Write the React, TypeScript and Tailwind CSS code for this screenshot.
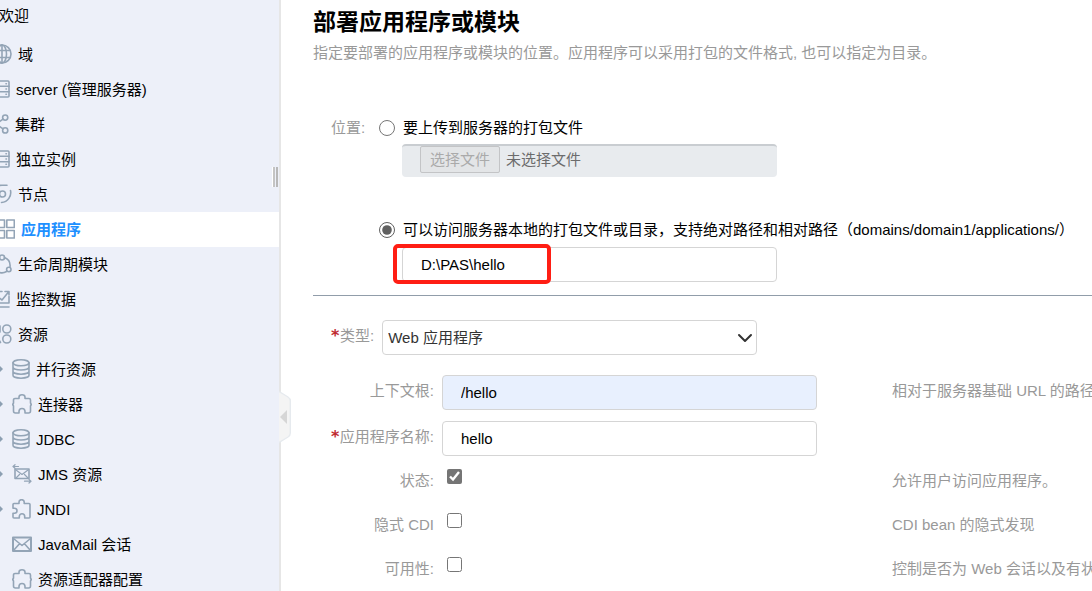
import { useState } from 'react';
import type { ReactNode } from 'react';
import clsx from 'clsx';
import { ChevronDown } from 'lucide-react';

interface IconProps {
    className: string;
    viewBox: string;
    children: ReactNode;
}

function Icon({ className, viewBox, children }: IconProps) {
    return (
        <svg className={clsx('mb-[2px] shrink-0 text-[#93a4b6]', className)} viewBox={viewBox} fill="none" stroke="currentColor" strokeWidth="1.6" strokeLinejoin="round" strokeLinecap="round" aria-hidden="true">
            {children}
        </svg>
    );
}

const GlobeIcon = () => (
    <Icon className="w-5 h-5" viewBox="0 0 20 20">
        <circle cx="10" cy="10" r="9" />
        <ellipse cx="10" cy="10" rx="4.5" ry="9" />
        <path d="M10 1v18M2 6.5h16M2 13.5h16" />
    </Icon>
);

const ServerIcon = () => (
    <Icon className="w-[18px] h-5" viewBox="0 0 18 20">
        <rect x="1" y="2" width="16" height="16" rx="1" />
        <path d="M1 7.3h16M1 12.7h16M14 4.7h.4M14 10h.4M14 15.3h.4" />
    </Icon>
);

const ClusterIcon = () => (
    <Icon className="w-[17px] h-5" viewBox="0 0 17 20">
        <circle cx="13.2" cy="3.6" r="2.6" />
        <circle cx="3.8" cy="10" r="2.6" />
        <circle cx="13.2" cy="16.4" r="2.6" />
        <path d="M11 5.2L6 8.6M6 11.4l5 3.4" />
    </Icon>
);

const NodeIcon = () => (
    <Icon className="w-5 h-5" viewBox="0 0 20 20">
        <circle cx="10.5" cy="10" r="3" />
        <path d="M15 1.2H10A8.800 8.800 0 0 0 2.500 14.500M18.500 6.500c1.200 5.500-2.500 11.500-9 12" />
    </Icon>
);

const AppsIcon = () => (
    <Icon className="w-[23px] h-5" viewBox="0 0 23 20">
        <rect x="5" y="1" width="7.5" height="7.5" />
        <rect x="14.8" y="1" width="7.5" height="7.5" />
        <rect x="5" y="11.5" width="7.5" height="7.5" />
        <rect x="14.8" y="11.5" width="7.5" height="7.5" />
    </Icon>
);

const LifecycleIcon = () => (
    <Icon className="w-5 h-5" viewBox="0 0 20 20">
        <circle cx="10" cy="3.5" r="2.5" />
        <circle cx="16.8" cy="15.5" r="2.2" />
        <circle cx="3.2" cy="15.5" r="2.2" />
        <path d="M12.500 3.500c4 1.500 6 5 5.500 9.500M7.500 3.500c-4 1.500-6 5-5.500 9.500M5.500 17.500c3 1.800 6 1.800 9 0" />
    </Icon>
);

const MonitorIcon = () => (
    <Icon className="w-[18px] h-5" viewBox="0 0 18 20">
        <path d="M10 2.500H1V14h16V7.500M4 6.500l6 4.500L16.500 3M13 2.500h4v3.500M1 18h16" />
    </Icon>
);

const ResourceIcon = () => (
    <Icon className="w-5 h-5" viewBox="0 0 20 20">
        <rect x="1" y="1.5" width="7" height="7" rx="1" />
        <circle cx="14.8" cy="5" r="4" />
        <path d="M4.5 11.5L8.5 18.5H1z" />
        <circle cx="14.8" cy="15" r="4" />
    </Icon>
);

const DatabaseIcon = () => (
    <Icon className="w-[18px] h-5" viewBox="0 0 18 20">
        <ellipse cx="9" cy="3.8" rx="8" ry="3" />
        <path d="M1 3.8v12.4c0 1.7 3.6 3 8 3s8-1.3 8-3V3.8M1 8c0 1.7 3.6 3 8 3s8-1.3 8-3M1 12.2c0 1.7 3.6 3 8 3s8-1.3 8-3" />
    </Icon>
);

const ConnectorIcon = () => (
    <Icon className="w-5 h-5" viewBox="0 0 20 20">
        <path d="M3 4.500h4V3.300a3 2.500 0 0 1 6 0v1.200h4a1.500 1.500 0 0 1 1.500 1.500v3l.8 1.500-.8 1.500v5a2 2 0 0 1-2 2H13v-1.500a3 3 0 0 0-6 0V19H3.500a2 2 0 0 1-2-2v-5L.7 10.500 1.500 9V6A1.500 1.500 0 0 1 3 4.500z" />
    </Icon>
);

const JmsIcon = () => (
    <Icon className="w-5 h-5" viewBox="0 0 20 20">
        <rect x="3" y="5" width="14" height="9.5" />
        <path d="M4 6l6 4.500L16 6M4 14l3.500-3.500M16 14l-3.500-3.500M6.500 2.500H1M3 .700L1 2.500l2 1.800M12.500 17.200H19M17 15.400l2 1.800-2 1.800" strokeWidth="1.2" />
    </Icon>
);

const PuzzleIcon = () => (
    <Icon className="w-[19px] h-5" viewBox="0 0 19 20">
        <path d="M2 4.500h5V3a2.600 2.300 0 0 1 5.200 0v1.500H17a1 1 0 0 1 1 1V18a1 1 0 0 1-1 1h-4.300v-1.500a2.700 2.700 0 0 0-5.400 0V19H2a1 1 0 0 1-1-1v-3.800h1.500a2.500 2.500 0 0 0 0-5H1V5.500a1 1 0 0 1 1-1z" />
    </Icon>
);

const MailIcon = () => (
    <Icon className="w-5 h-5" viewBox="0 0 20 20">
        <rect x="1" y="3.5" width="18" height="13.5" strokeWidth="2" />
        <path d="M1.500 4.500L10 11.500l8.500-7M1.500 16.500l6-6.800M18.500 16.500l-6-6.800" />
    </Icon>
);

const menu = [
    { label: '域', icon: <GlobeIcon /> },
    { label: 'server (管理服务器)', icon: <ServerIcon /> },
    { label: '集群', icon: <ClusterIcon /> },
    { label: '独立实例', icon: <ServerIcon /> },
    { label: '节点', icon: <NodeIcon /> },
    { label: '应用程序', icon: <AppsIcon /> },
    { label: '生命周期模块', icon: <LifecycleIcon /> },
    { label: '监控数据', icon: <MonitorIcon /> },
    { label: '资源', icon: <ResourceIcon /> },
];

const resources = [
    { label: '并行资源', icon: <DatabaseIcon />, expandable: true },
    { label: '连接器', icon: <ConnectorIcon />, expandable: true },
    { label: 'JDBC', icon: <DatabaseIcon />, expandable: true },
    { label: 'JMS 资源', icon: <JmsIcon />, expandable: true },
    { label: 'JNDI', icon: <PuzzleIcon />, expandable: true },
    { label: 'JavaMail 会话', icon: <MailIcon />, expandable: false },
    { label: '资源适配器配置', icon: <ConnectorIcon />, expandable: false },
];

function Sidebar() {
    const [active, setActive] = useState('应用程序');

    return (
        <aside className="relative w-[281px] shrink-0 border-r-2 border-[#e6e6e6] bg-[#edf0f9]">
            <nav className="h-full overflow-hidden">
                <a href="#welcome" className="-ml-px flex h-[37px] items-center pb-[5px]">欢迎</a>
                {menu.map((item) => (
                    <a
                        key={item.label}
                        href="#menu"
                        onClick={() => setActive(item.label)}
                        className={clsx('flex h-[35px] items-center', active === item.label && 'bg-white font-bold text-[#1e90ff]')}
                    >
                        <span className="-ml-2 flex items-center gap-[6px]">
                            {item.icon}
                            {item.label}
                        </span>
                    </a>
                ))}
                {resources.map((item) => (
                    <a key={item.label} href="#resource" className="flex h-[35px] items-center">
                        <span className="w-3">
                            {item.expandable && (
                                <svg className="mb-[2px] h-2 w-[3px]" viewBox="0 0 3 8" fill="#8c9fb2" aria-hidden="true">
                                    <path d="M0 1l3 3-3 3z" />
                                </svg>
                            )}
                        </span>
                        <span className="flex items-center gap-[6px]">
                            {item.icon}
                            {item.label}
                        </span>
                    </a>
                ))}
            </nav>

            {/* Resize grip */}
            <div className="absolute right-px top-[167px] flex h-5 gap-px border-l border-white">
                <span className="w-[2px] bg-[#c4c4c4]" />
                <span className="w-[2px] bg-[#b8b8b8]" />
            </div>

            {/* Collapse handle */}
            <button type="button" aria-label="collapse" className="absolute -right-3 top-[391px] z-10">
                <svg className="h-[52px] w-3" viewBox="0 0 12 52">
                    <path d="M0 .5L9 6q2.3 1.5 2.3 4v32q0 2.5-2.3 4L0 51.5z" fill="#f4f4f4" />
                    <path d="M0 .5L9 6q2.3 1.5 2.3 4v32q0 2.5-2.3 4L0 51.5" fill="none" stroke="#e6eaee" strokeWidth="1.4" />
                    <path d="M8 19v14L1 26z" fill="#d6d6d6" />
                </svg>
            </button>
        </aside>
    );
}

const fieldClass = 'h-[35px] w-[375px] shrink-0 rounded-[4px] border border-[#d5d5d5]';

function FieldLabel({ htmlFor, required, children }: { htmlFor: string; required?: boolean; children: ReactNode }) {
    return (
        <label htmlFor={htmlFor} className="flex justify-end pb-1 text-[#999]">
            {required && <span className="w-[9px] font-['DejaVu_Sans',sans-serif] text-base leading-5 font-bold text-[#c02a30]">*</span>}
            {children}
        </label>
    );
}

interface RowProps {
    id: string;
    label: string;
    required?: boolean;
    hint?: string;
    children: ReactNode;
}

function Row({ id, label, required, hint, children }: RowProps) {
    return (
        <div className="flex items-center">
            <div className="mr-2 w-[103px] shrink-0">
                <FieldLabel htmlFor={id} required={required}>{label}</FieldLabel>
            </div>
            {children}
            {hint && <p className="ml-[75px] pb-1 text-[#999]">{hint}</p>}
        </div>
    );
}

function CheckRow({ id, label, hint, defaultChecked }: { id: string; label: string; hint: string; defaultChecked?: boolean }) {
    return (
        <div className="flex h-11 items-center">
            <label htmlFor={id} className="mr-2 w-[103px] shrink-0 text-right text-[#999]">{label}</label>
            <div className="h-full w-[375px] shrink-0 pl-[5px] pt-[10px]">
                <input id={id} type="checkbox" defaultChecked={defaultChecked} className="block size-[15px] accent-[#757575]" />
            </div>
            <p className="ml-[75px] text-[#999]">{hint}</p>
        </div>
    );
}

export default function App() {
    const [source, setSource] = useState<'upload' | 'local'>('local');

    return (
        <div className="flex h-screen overflow-hidden whitespace-nowrap bg-white font-['Liberation_Sans','Noto_Sans_CJK_SC',sans-serif] text-[15px] leading-5 text-black">
            <Sidebar />

            <main className="min-w-0 flex-1 overflow-hidden pl-8">
                <h1 className="pt-2 text-[23px] font-bold leading-7">部署应用程序或模块</h1>
                <p className="mt-[7px] text-[#999]">指定要部署的应用程序或模块的位置。应用程序可以采用打包的文件格式, 也可以指定为目录。</p>

                <div className="mt-[55px] flex pl-[18px]">
                    <span className="w-12 shrink-0 text-[#999]">位置:</span>
                    <div>
                        <label className="flex items-center gap-2">
                            <input type="radio" name="source" checked={source === 'upload'} onChange={() => setSource('upload')} className="size-4 accent-[#606060]" />
                            要上传到服务器的打包文件
                        </label>
                        <div className="ml-[23px] mt-[6px] flex h-[33px] w-[375px] items-start rounded-[4px] border-t-2 border-[#c9cdd1] bg-[#e8ebee] pl-[18px]">
                            <button type="button" disabled className="h-[27px] w-20 rounded-[2px] border border-[#c3c4c6] bg-[#e3e5e7] text-[#aaa]">选择文件</button>
                            <span className="ml-[6px] pt-1 text-[#6c6c6c]">未选择文件</span>
                        </div>

                        <label className="mt-[43px] flex items-center gap-2">
                            <input type="radio" name="source" checked={source === 'local'} onChange={() => setSource('local')} className="size-4 accent-[#606060]" />
                            可以访问服务器本地的打包文件或目录，支持绝对路径和相对路径（domains/domain1/applications/）
                        </label>
                        <div className="relative ml-[23px] mt-[7px]">
                            <input type="text" aria-label="路径" defaultValue="D:\PAS\hello" className={clsx(fieldClass, 'block px-[18px]')} />
                            <div className="pointer-events-none absolute -left-[9px] -top-[3px] h-10 w-[158px] rounded-[5px] border-4 border-[#ff1e14]" />
                        </div>
                    </div>
                </div>

                <hr className="mt-[13px] border-[#919daa]" />

                <div className="mt-6 flex items-center gap-2 pl-[18px]">
                    <FieldLabel htmlFor="type" required>类型:</FieldLabel>
                    <div className="relative">
                        <select id="type" className={clsx(fieldClass, 'block appearance-none bg-white px-[5px] text-[#333]')}>
                            <option>Web 应用程序</option>
                        </select>
                        <ChevronDown size={24} className="pointer-events-none absolute inset-y-0 right-0 my-auto text-[#333]" />
                    </div>
                </div>

                <div className="mt-5 flex flex-col gap-[11px] pl-[18px]">
                    <Row id="context" label="上下文根:" hint="相对于服务器基础 URL 的路径。">
                        <input id="context" type="text" defaultValue="/hello" className={clsx(fieldClass, 'bg-[#e8f0fe] px-[18px]')} />
                    </Row>
                    <Row id="name" label="应用程序名称:" required>
                        <input id="name" type="text" defaultValue="hello" className={clsx(fieldClass, 'px-[18px]')} />
                    </Row>
                </div>

                <div className="mt-[3px] pl-[18px]">
                    <CheckRow id="status" label="状态:" hint="允许用户访问应用程序。" defaultChecked />
                    <CheckRow id="cdi" label="隐式 CDI" hint="CDI bean 的隐式发现" />
                    <CheckRow id="availability" label="可用性:" hint="控制是否为 Web 会话以及有状态会话启用可用性。" />
                </div>
            </main>
        </div>
    );
}
